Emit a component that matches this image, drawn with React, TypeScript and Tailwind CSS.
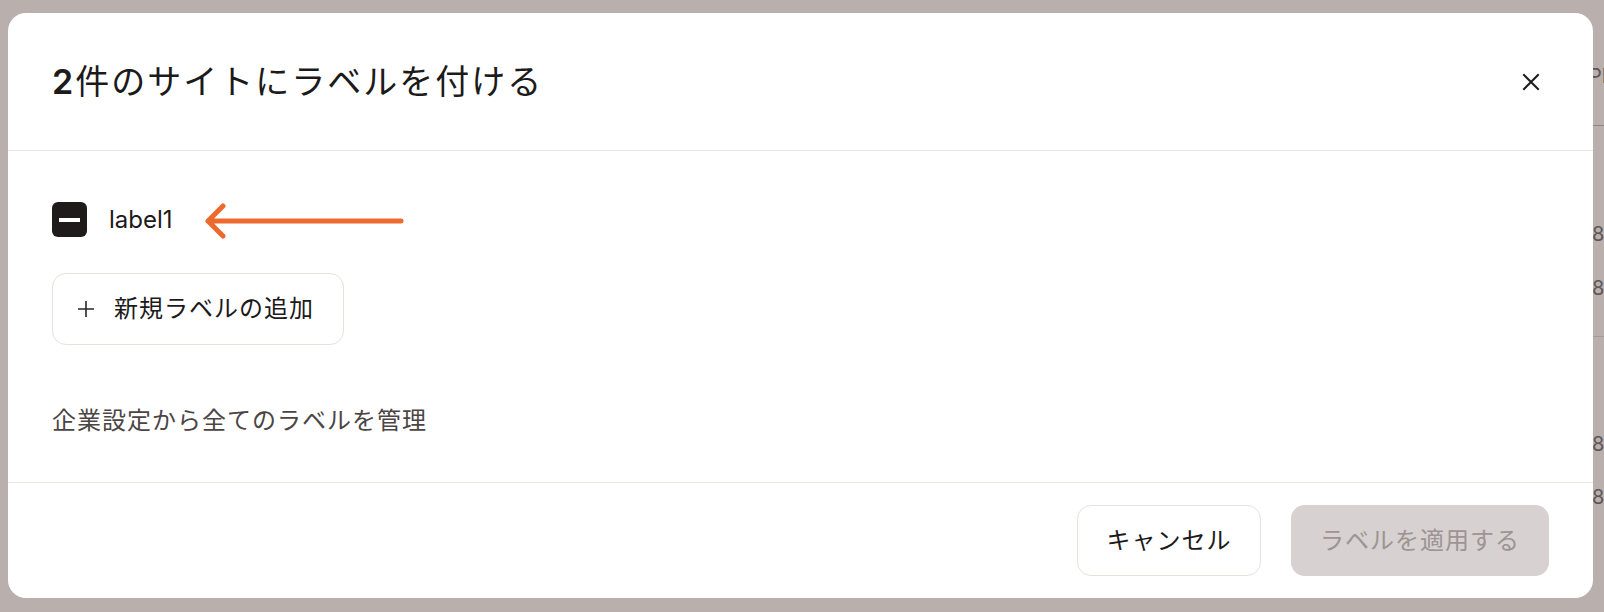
import React from 'react';

const jp = '[font-family:Inter,"Noto_Sans_CJK_JP",sans-serif]';

function CloseIcon() {
    return (
        <svg width="18" height="18" viewBox="0 0 18 18" fill="none" stroke="#1c1a1a" strokeWidth="2" strokeLinecap="square">
            <path d="M2 2 L16 16 M16 2 L2 16" />
        </svg>
    );
}

function PlusIcon() {
    return (
        <svg width="18" height="18" viewBox="0 0 18 18" fill="none" stroke="#2a2626" strokeWidth="1.6">
            <path d="M9 1 V17 M1 9 H17" />
        </svg>
    );
}

function Arrow() {
    // annotation arrow pointing at the label
    return (
        <svg width="204" height="40" viewBox="0 0 204 40" fill="none" className="drop-shadow-[0_0_2px_rgba(255,255,255,0.9)]">
            <path d="M4 20 H197 M19 5 L4 20 L19 35" stroke="#ec6a2e" strokeWidth="5" strokeLinecap="round" strokeLinejoin="round" />
        </svg>
    );
}

function Button(props: { children: React.ReactNode, className?: string }) {
    return (
        <button className={`h-[71px] rounded-[14px] text-[24px] tracking-[1px] ${jp} ${props.className || ''}`}>
            {props.children}
        </button>
    );
}

export default function App() {
    return (
        <div className="w-[1604px] h-[612px] bg-[#b9afad] flex pt-[13px] pl-[8px] overflow-hidden">
            <div className="w-[1585px] h-[585px] shrink-0 bg-white rounded-[18px] flex flex-col overflow-hidden">
                <header className="h-[138px] shrink-0 border-b border-[#ebe4df] pl-11 pr-[44px] flex items-center justify-between">
                    <h1 className={`text-[34px] tracking-[2px] text-[#1c1a1a] leading-none ${jp}`}>
                        <span className="font-semibold">2</span>件のサイトにラベルを付ける
                    </h1>
                    <button className="w-9 h-9 flex items-center justify-center">
                        <CloseIcon />
                    </button>
                </header>

                <div className="flex-1 px-11 pt-[51px] flex flex-col items-start">
                    <div className="flex items-center h-[35px]">
                        <div className="w-[35px] h-[35px] rounded-[6px] bg-[#1f1b1b] flex items-center justify-center">
                            <div className="w-[21px] h-[4px] bg-white" />
                        </div>
                        <span className="ml-[22px] text-[24px] text-[#1c1a1a] [font-family:Inter,sans-serif]">label1</span>
                        <div className="ml-[31px] mt-[2px]">
                            <Arrow />
                        </div>
                    </div>

                    <button className="mt-[36px] h-[72px] w-[292px] rounded-[14px] border border-[#e9e1dc] flex items-center pl-[24px] gap-[19px]">
                        <PlusIcon />
                        <span className={`text-[24px] tracking-[1px] text-[#1c1a1a] ${jp}`}>新規ラベルの追加</span>
                    </button>

                    <p className={`mt-[60px] text-[24px] leading-[32px] tracking-[1px] text-[#4b4544] ${jp}`}>
                        企業設定から全てのラベルを管理
                    </p>
                </div>

                <footer className="h-[116px] shrink-0 border-t border-[#ebe4df] px-11 flex items-center justify-end gap-[30px]">
                    <Button className="w-[184px] border border-[#e9e1dc] bg-white text-[#1c1a1a]">キャンセル</Button>
                    <Button className="w-[258px] bg-[#d7d1d1] text-[#9d9493]">ラベルを適用する</Button>
                </footer>
            </div>

            {/* page content peeking out behind the overlay */}
            <div className={`flex-1 -mt-[13px] overflow-hidden flex flex-col text-[20px] leading-[20px] text-[#5e5656] whitespace-nowrap ${jp}`}>
                <span className="mt-[66px] -ml-[4px]">PH</span>
                <div className="mt-[39px] h-px w-full bg-[#8e8584]" />
                <span className="mt-[98px] -ml-[1px]">8</span>
                <span className="mt-[34px] -ml-[1px]">8</span>
                <div className="mt-[38px] h-px w-full bg-[#a59c9a]" />
                <span className="mt-[97px] -ml-[1px]">8</span>
                <span className="mt-[33px] -ml-[1px]">8</span>
            </div>
        </div>
    );
}
